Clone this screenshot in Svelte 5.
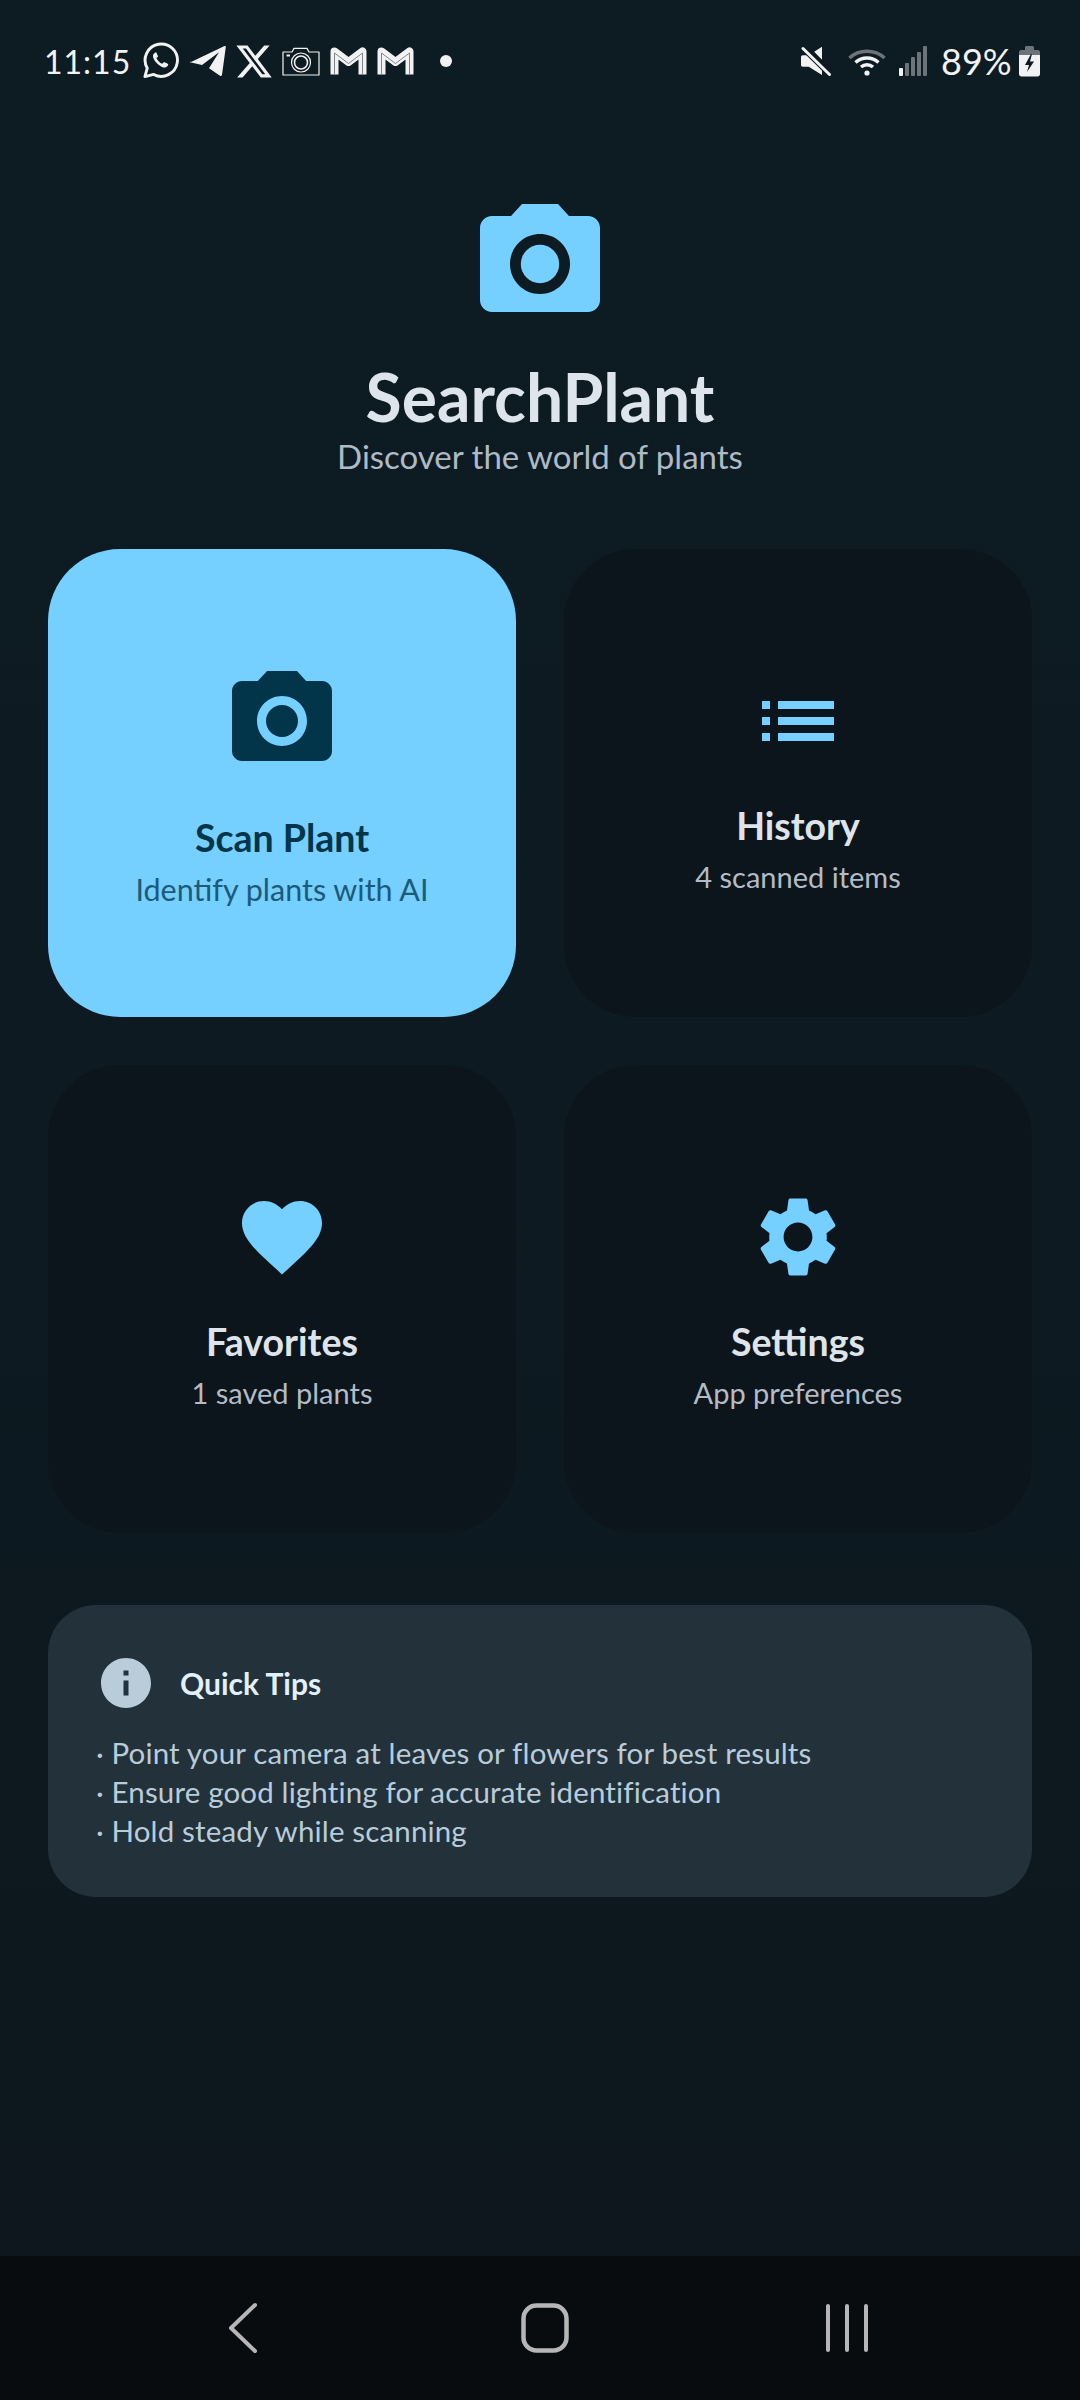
<script lang="ts">
  const cameraPath =
    "M9 2L7.17 4H4c-1.1 0-2 .9-2 2v12c0 1.1.9 2 2 2h16c1.1 0 2-.9 2-2V6c0-1.1-.9-2-2-2h-3.17L15 2H9zm3 15c-2.76 0-5-2.24-5-5s2.24-5 5-5 5 2.24 5 5-2.24 5-5 5z";

  const cards = [
    {
      title: "Scan Plant",
      sub: "Identify plants with AI",
      primary: true,
      path: cameraPath,
    },
    {
      title: "History",
      sub: "4 scanned items",
      path: "M3 13h2v-2H3v2zm0 4h2v-2H3v2zm0-8h2V7H3v2zm4 4h14v-2H7v2zm0 4h14v-2H7v2zM7 7v2h14V7H7z",
    },
    {
      title: "Favorites",
      sub: "1 saved plants",
      path: "M12 21.35l-1.45-1.32C5.4 15.36 2 12.28 2 8.5 2 5.42 4.42 3 7.5 3c1.74 0 3.41.81 4.5 2.09C13.09 3.81 14.76 3 16.5 3 19.58 3 22 5.42 22 8.5c0 3.78-3.4 6.86-8.55 11.54L12 21.35z",
    },
    {
      title: "Settings",
      sub: "App preferences",
      path: "M19.14 12.94c.04-.3.06-.61.06-.94 0-.32-.02-.64-.07-.94l2.03-1.58c.18-.14.23-.41.12-.61l-1.92-3.32c-.12-.22-.37-.29-.59-.22l-2.39.96c-.5-.38-1.03-.7-1.62-.94l-.36-2.54c-.04-.24-.24-.41-.48-.41h-3.84c-.24 0-.43.17-.47.41l-.36 2.54c-.59.24-1.13.57-1.62.94l-2.39-.96c-.22-.08-.47 0-.59.22L2.74 8.87c-.12.21-.08.47.12.61l2.03 1.58c-.05.3-.09.63-.09.94s.02.64.07.94l-2.03 1.58c-.18.14-.23.41-.12.61l1.92 3.32c.12.22.37.29.59.22l2.39-.96c.5.38 1.03.7 1.62.94l.36 2.54c.05.24.24.41.48.41h3.84c.24 0 .44-.17.47-.41l.36-2.54c.59-.24 1.13-.56 1.62-.94l2.39.96c.22.08.47 0 .59-.22l1.92-3.32c.12-.22.07-.47-.12-.61l-2.01-1.58zM12 15.6c-1.98 0-3.6-1.62-3.6-3.6s1.62-3.6 3.6-3.6 3.6 1.62 3.6 3.6-1.62 3.6-3.6 3.6z",
    },
  ];

  const tips = [
    "Point your camera at leaves or flowers for best results",
    "Ensure good lighting for accurate identification",
    "Hold steady while scanning",
  ];
</script>

<div class="page">
  <div class="status">
    <span class="time">11:15</span>
    <div class="notifs">
      <svg width="37" height="38" viewBox="0 0 38 38" fill="none" stroke="#f2f2f2" stroke-width="3">
        <path d="M3 35l2.4-8.6A16.6 16.6 0 1 1 12 32.8z" stroke-linejoin="round" />
        <path d="M13.2 10.5c-1.6 1-2.4 3-1.6 5.2 1.4 4 5.4 8 9.6 9.6 2.4.8 4.4 0 5.4-1.8l.4-1.4-4.4-2.2-1.8 2c-2.4-.8-5-3.4-6-6l1.8-1.6-2-4.4z" fill="#f2f2f2" stroke="none" />
      </svg>
      <svg width="37" height="32" viewBox="0 0 37 32">
        <path d="M1 17.500L35.500 1c.8-.3 1.400.2 1.300 1L33 29.800c-.2 1-1 1.500-2 1l-11-7.500 10-16-17 12.700-10.800-2.400c-1.300-.4-1.400-1-.2-1.600z" fill="#f2f2f2" />
      </svg>
      <svg width="36" height="33" viewBox="1 2 22 20">
        <path d="M18.244 2.25h3.308l-7.227 8.26 8.502 11.24H16.17l-5.214-6.817L4.99 21.75H1.68l7.73-8.835L1.254 2.25H8.08l4.713 6.231zm-1.161 17.52h1.833L7.084 4.126H5.117z" fill="#f2f2f2" />
      </svg>
      <svg width="38" height="29" viewBox="0 0 38 29" fill="none" stroke="#f2f2f2" stroke-width="1.2">
        <path d="M1 5h9l2-3.600h13L27 5h10v23H1z" stroke-linejoin="round" />
        <circle cx="19" cy="15.500" r="9.500" />
        <circle cx="19" cy="15.500" r="6.500" stroke-width="1.600" />
        <path d="M4.500 8.500h3.500" stroke-width="2" />
      </svg>
      <svg width="37" height="30" viewBox="0 0 37 30" fill="none">
        <path d="M4.500 28.500V5.500L18.500 16l14-10.500v23" stroke="#f2f2f2" stroke-width="8" stroke-linejoin="round" />
        <path d="M4.500 28V7L18.500 17.500 32.500 7v21" stroke="#7d888e" stroke-width="1" />
      </svg>
      <svg width="37" height="30" viewBox="0 0 37 30" fill="none">
        <path d="M4.500 28.500V5.500L18.500 16l14-10.500v23" stroke="#f2f2f2" stroke-width="8" stroke-linejoin="round" />
        <path d="M4.500 28V7L18.500 17.500 32.500 7v21" stroke="#7d888e" stroke-width="1" />
      </svg>
      <span class="dot"></span>
    </div>
    <div class="sys">
      <svg width="30" height="30" viewBox="0 0 30 30">
        <path d="M0 11c0-1 .8-1.800 1.800-1.800h6L21 .7V29L7.800 20.700h-6C.8 20.700 0 20 0 19z" fill="#f2f2f2" />
        <path d="M6 1.500l26 26" stroke="#0d1a22" stroke-width="4" />
        <path d="M2 2.500l26.500 26" stroke="#0d1a22" stroke-width="5" />
        <path d="M2 2.500l26.500 26" stroke="#f2f2f2" stroke-width="3" stroke-linecap="round" />
      </svg>
      <svg width="38" height="29" viewBox="0 0 38 29" fill="none" stroke-width="3.400">
        <path d="M1.500 11C11 2 27 2 36.500 11" stroke="#6c7479" />
        <path d="M7.500 15.500c6.500-6 16.500-6 23 0" stroke="#f2f2f2" />
        <path d="M13 20c3.500-3 8.500-3 12 0" stroke="#f2f2f2" />
        <circle cx="19" cy="26" r="2.600" fill="#f2f2f2" stroke="none" />
      </svg>
      <svg class="signal" width="28" height="30" viewBox="0 0 28 30">
        <rect x="0" y="22" width="4" height="8" rx="1" fill="#f2f2f2" />
        <rect x="6" y="17" width="4" height="13" rx="1" fill="#6c7479" />
        <rect x="12" y="11" width="4" height="19" rx="1" fill="#6c7479" />
        <rect x="18" y="6" width="4" height="24" rx="1" fill="#6c7479" />
        <rect x="24" y="0" width="4" height="30" rx="1" fill="#6c7479" />
      </svg>
      <span class="batt-text">89%</span>
      <svg class="batt" width="21" height="32" viewBox="0 0 21 32">
        <path d="M6 2.500c0-1 .8-1.500 1.500-1.500h6c.8 0 1.500.5 1.500 1.500V5h4c1 0 2 1 2 2v4H0V7c0-1 1-2 2-2h4z" fill="#6c7479" />
        <path d="M0 10h21v19c0 1.500-1 2.500-2.500 2.500h-16C1 31.500 0 30.500 0 29z" fill="#f2f2f2" />
        <path d="M12 9l-6 11h4l-2 7 7-10.500h-4L13 9z" fill="#0d1a22" />
      </svg>
    </div>
  </div>

  <main class="content">
    <header class="hero">
      <svg class="logo" width="144" height="144" viewBox="0 0 24 24">
        <circle cx="12" cy="12" r="3.2" fill="#75cfff" />
        <path d={cameraPath} fill="#75cfff" />
      </svg>
      <h1>SearchPlant</h1>
      <p>Discover the world of plants</p>
    </header>

    <div class="grid">
      {#each cards as card}
        <div class="card" class:primary={card.primary}>
          <svg class="icon" viewBox="0 0 24 24">
            {#if card.primary}
              <circle cx="12" cy="12" r="3.2" />
            {/if}
            <path d={card.path} />
          </svg>
          <div class="card-title">{card.title}</div>
          <div class="card-sub">{card.sub}</div>
        </div>
      {/each}
    </div>

    <section class="tips">
      <div class="tips-head">
        <svg width="60" height="60" viewBox="0 0 24 24">
          <path d="M12 2C6.48 2 2 6.48 2 12s4.480 10 10 10 10-4.480 10-10S17.520 2 12 2zm1 15h-2v-6h2v6zm0-8h-2V7h2v2z" fill="#b8ccda" />
        </svg>
        <h2>Quick Tips</h2>
      </div>
      {#each tips as tip}
        <div class="tip">· {tip}</div>
      {/each}
    </section>
  </main>

  <nav class="nav">
    <svg width="30" height="52" viewBox="0 0 30 52" fill="none" stroke="#b6b6b6" stroke-width="4" stroke-linecap="round" stroke-linejoin="round">
      <path d="M27 3L3 26l24 23" />
    </svg>
    <svg width="48" height="50" viewBox="0 0 48 50" fill="none" stroke="#b6b6b6" stroke-width="4.500">
      <rect x="2.500" y="2.500" width="43" height="45" rx="13" />
    </svg>
    <svg width="44" height="48" viewBox="0 0 44 48" fill="none" stroke="#b6b6b6" stroke-width="4" stroke-linecap="round">
      <path d="M3 2v44M22 2v44M41 2v44" />
    </svg>
  </nav>
</div>

<style>
  :global(body) {
    margin: 0;
    background: #0d171d;
  }

  .page {
    width: 1080px;
    height: 2400px;
    display: flex;
    flex-direction: column;
    font-family: Lato, sans-serif;
    background: linear-gradient(180deg, #0d1b23 0%, #0d1a21 50%, #0d171d 100%);
    color: #dde3ea;
  }

  .status {
    height: 122px;
    flex-shrink: 0;
    display: flex;
    align-items: center;
    padding: 0 40px 0 44px;
    box-sizing: border-box;
    color: #f2f2f2;
  }

  .time {
    width: 84px;
    font-size: 32px;
    letter-spacing: 1px;
    white-space: nowrap;
  }

  .notifs {
    display: flex;
    align-items: center;
    gap: 10px;
    margin-left: 14px;
    flex: 1;
  }

  .dot {
    width: 12px;
    height: 12px;
    border-radius: 50%;
    background: #f2f2f2;
    margin-left: 16px;
  }

  .sys {
    display: flex;
    align-items: center;
    gap: 17px;
  }

  .signal {
    margin-left: -4px;
  }

  .batt-text {
    font-size: 36px;
    width: 70px;
    margin-left: -3px;
    white-space: nowrap;
  }

  .batt {
    margin-left: -9px;
  }

  .content {
    flex: 1;
    display: flex;
    flex-direction: column;
    padding: 0 48px;
  }

  .hero {
    display: flex;
    flex-direction: column;
    align-items: center;
    padding-top: 70px;
  }

  .logo {
    display: block;
  }

  h1 {
    margin: 23px 0 0;
    font-size: 66px;
    line-height: 75px;
    font-weight: 700;
    color: #dde4ec;
  }

  .hero p {
    margin: 0;
    font-size: 33px;
    line-height: 44px;
    color: #aebac6;
  }

  .grid {
    display: grid;
    grid-template-columns: 468px 468px;
    gap: 48px;
    margin-top: 71px;
  }

  .card {
    height: 468px;
    border-radius: 72px;
    background: #0c151b;
    display: flex;
    flex-direction: column;
    align-items: center;
    justify-content: center;
    color: #dfe4ea;
  }

  .card.primary {
    background: #75cfff;
    color: #023549;
  }

  .icon {
    width: 96px;
    height: 96px;
    fill: #75cfff;
    margin-bottom: 33px;
  }

  .primary .icon {
    width: 120px;
    height: 120px;
    fill: #023549;
  }

  .card-title {
    font-size: 37.5px;
    line-height: 48px;
    font-weight: 700;
    margin-bottom: 11px;
  }

  .card-sub {
    font-size: 29px;
    line-height: 32px;
    color: #b3bcc6;
  }

  .primary .card-sub {
    font-size: 30.5px;
    color: #1c5a78;
  }

  .tips {
    margin-top: 72px;
    padding: 48px 48px 47px;
    border-radius: 48px;
    background: #23313b;
  }

  .tips-head {
    display: flex;
    align-items: center;
    gap: 24px;
    margin-bottom: 20px;
  }

  .tips-head svg {
    display: block;
  }

  h2 {
    margin: 0;
    font-size: 30px;
    font-weight: 700;
    color: #e1f0fa;
  }

  .tip {
    font-size: 29.5px;
    line-height: 39px;
    letter-spacing: 0.15px;
    color: #b8ccda;
  }

  .nav {
    height: 144px;
    flex-shrink: 0;
    background: #080c0f;
    display: grid;
    grid-template-columns: repeat(3, 302px);
    justify-content: center;
    justify-items: center;
    align-items: center;
    padding-left: 10px;
  }
</style>
